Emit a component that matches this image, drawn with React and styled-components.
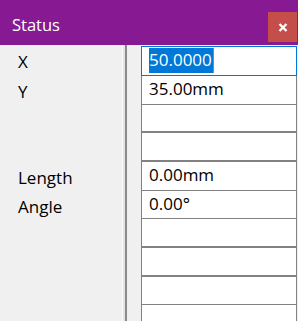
import React from 'react'
import styled, { createGlobalStyle } from 'styled-components'

const GlobalStyle = createGlobalStyle`
  html, body {
    margin: 0;
    padding: 0;
    background: #f0f0f0;
    overflow: hidden;
  }
`

const rows = [
  { label: 'X', value: '50.0000', h: 29, focused: true },
  { label: 'Y', value: '35.00mm', h: 29 },
  { label: '', value: '', h: 28, thick: true },
  { label: '', value: '', h: 29, thick: true },
  { label: 'Length', value: '0.00mm', h: 29 },
  { label: 'Angle', value: '0.00°', h: 28 },
  { label: '', value: '', h: 29, thick: true },
  { label: '', value: '', h: 29, thick: true },
  { label: '', value: '', h: 28 },
  { label: '', value: '', h: 29 },
]

const Window = styled.div`
  width: 298px;
  height: 321px;
  display: flex;
  flex-direction: column;
  overflow: hidden;
  background: #f0f0f0;
  font-family: 'Open Sans', 'Noto Sans', sans-serif;
`

const TitleBar = styled.div`
  height: 45px;
  flex: none;
  display: flex;
  align-items: center;
  justify-content: space-between;
  background: #871a93;
  padding-left: 12px;
  padding-right: 1px;
  box-sizing: border-box;
`

const Title = styled.span`
  color: #fff;
  font-size: 16.5px;
  line-height: 20px;
  margin-top: 4px;
`

const CloseButton = styled.div`
  width: 29px;
  height: 30px;
  margin-top: 9px;
  background: #c44f4a;
  display: flex;
  align-items: center;
  justify-content: center;
`

const Body = styled.div`
  flex: 1;
  display: flex;
  padding-top: 1px;
  min-height: 0;
`

const LabelColumn = styled.div`
  width: 122px;
  flex: none;
  display: flex;
  flex-direction: column;
`

const LabelRow = styled.div`
  height: ${(p) => p.$h}px;
  flex: none;
  box-sizing: border-box;
  padding: 4px 0 0 18px;
  font-size: 17px;
  line-height: 23px;
  color: #000;
`

const Splitter = styled.div`
  width: 5px;
  flex: none;
  margin-top: -1px;
  border-left: 1px solid #fbfbfb;
  background: linear-gradient(to right, #e4e4e4 0 2px, #8a8a8a 2px 4px);
  box-sizing: border-box;
`

const Gutter = styled.div`
  width: 14px;
  flex: none;
`

const CellColumn = styled.div`
  width: 156px;
  flex: none;
  display: flex;
  flex-direction: column;
`

const Cell = styled.div`
  height: ${(p) => p.$h + (p.$first ? 1 : 0)}px;
  flex: none;
  box-sizing: border-box;
  background: #fff;
  border: 1px solid #828282;
  border-top-width: ${(p) => (p.$first ? 1 : 0)}px;
  border-bottom-width: ${(p) => (p.$thick ? 2 : 1)}px;
  border-color: ${(p) => (p.$focused ? '#0078d7' : '#828282')};
  padding: 1px 0 0 7px;
  font-size: 17px;
  line-height: 24px;
  color: #000;
  white-space: nowrap;
`

const Selected = styled.span`
  display: inline-block;
  background: #0078d7;
  color: #fff;
  height: 25px;
  line-height: 24px;
  padding-right: 1px;
  border-right: 1px solid #c87a2a;
`

const RightEdge = styled.div`
  width: 1px;
  flex: none;
`

function CloseIcon() {
  return (
    <svg width="10" height="9" viewBox="0 0 10 9">
      <path d="M1.5 1 L8.5 8 M8.5 1 L1.5 8" stroke="#fff" strokeWidth="2.3" strokeLinecap="butt" />
    </svg>
  )
}

export default function App() {
  return (
    <>
      <GlobalStyle />
      <Window>
        <TitleBar>
          <Title>Status</Title>
          <CloseButton>
            <CloseIcon />
          </CloseButton>
        </TitleBar>
        <Body>
          <LabelColumn>
            {rows.map((r, i) => (
              <LabelRow key={i} $h={r.h + (i === 0 ? 1 : 0)}>
                {r.label}
              </LabelRow>
            ))}
          </LabelColumn>
          <Splitter />
          <Gutter />
          <CellColumn>
            {rows.map((r, i) => (
              <Cell key={i} $h={r.h} $first={i === 0} $thick={r.thick} $focused={r.focused}>
                {r.focused ? <Selected>{r.value}</Selected> : r.value}
              </Cell>
            ))}
          </CellColumn>
          <RightEdge />
        </Body>
      </Window>
    </>
  )
}
